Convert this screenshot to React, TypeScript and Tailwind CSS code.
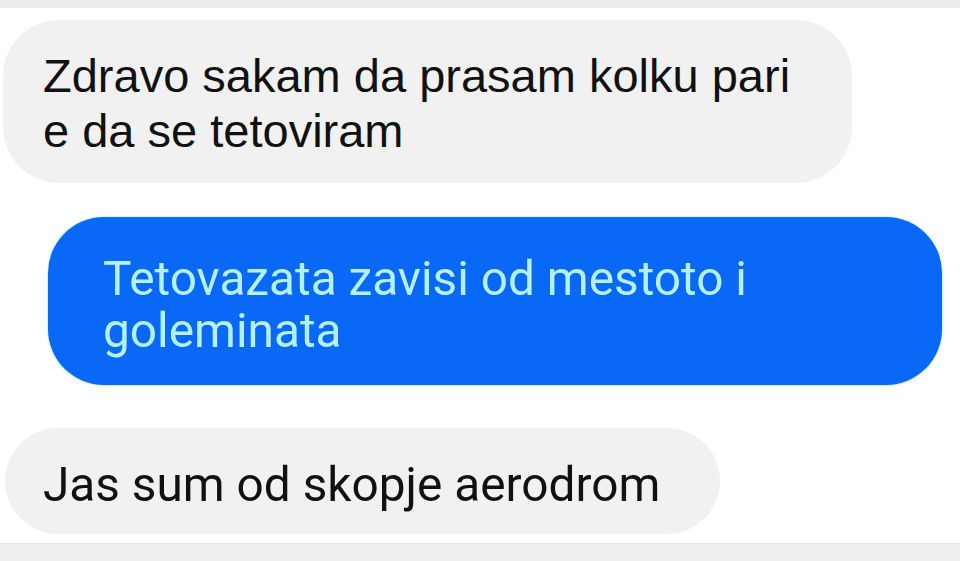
const roboto = { fontFamily: 'Roboto, "Liberation Sans", sans-serif' }
const arial = { fontFamily: '"Liberation Sans", Arial, sans-serif' }

function Bubble({
  children,
  className,
  font,
}: {
  children: React.ReactNode
  className: string
  font: React.CSSProperties
}) {
  return (
    <div className={'rounded-[56px] ' + className} style={font}>
      {children}
    </div>
  )
}

export default function App() {
  return (
    <div className="flex h-[561px] w-[960px] flex-col overflow-hidden bg-white">
      <div className="h-[8px] w-full shrink-0 bg-[#ececec]" />

      <Bubble
        font={arial}
        className="ml-[3px] mt-[12px] h-[163px] w-[849px] shrink-0 bg-[#f1f1f1] pl-[40px] pt-[28px] text-[47px] leading-[55px] text-[#111]"
      >
        Zdravo sakam da prasam kolku pari
        <br />
        e da se tetoviram
      </Bubble>

      <Bubble
        font={roboto}
        className="ml-[48px] mt-[34px] h-[168px] w-[894px] shrink-0 bg-[#0a68f6] pl-[55px] pt-[36px] text-[49px] leading-[52px] text-[#b3f1ff] ring-1 ring-[#cdf6ff]"
      >
        <span className="inline-block origin-left scale-x-[0.975] whitespace-nowrap">
          Tetovazata zavisi od mestoto i
          <br />
          goleminata
        </span>
      </Bubble>

      <Bubble
        font={roboto}
        className="ml-[5px] mt-[43px] h-[106px] w-[715px] shrink-0 bg-[#f1f1f1] pl-[38px] pt-[31px] text-[49px] leading-[52px] text-[#111]"
      >
        <span className="inline-block origin-left scale-x-[0.975] whitespace-nowrap">
          Jas sum od skopje aerodrom
        </span>
      </Bubble>

      <div className="mt-auto h-[18px] w-full shrink-0 border-t border-[#e2e2e2] bg-[#efefef]" />
    </div>
  )
}
